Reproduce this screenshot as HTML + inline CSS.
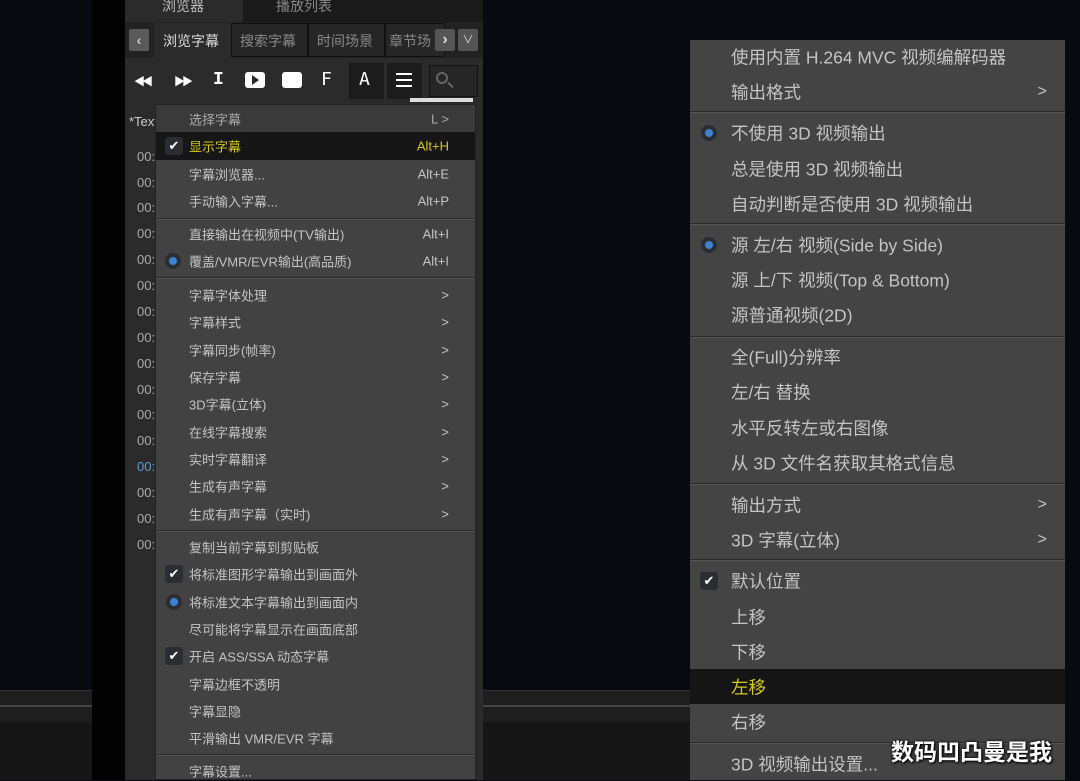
<!DOCTYPE html>
<html><head><meta charset="utf-8"><style>
*{margin:0;padding:0;box-sizing:border-box}
body{width:1080px;height:780px;overflow:hidden;background:#070a0e;position:relative;font-family:"Liberation Sans","Noto Sans CJK SC",sans-serif}
.a{position:absolute}
.lm div.t{position:absolute;left:33px;font-size:13px;color:#c4c4c4;white-space:nowrap;transform:translateY(-50%)}
.lm div.k{position:absolute;right:26px;font-size:13px;color:#c4c4c4;transform:translateY(-50%)}
.sep{position:absolute;height:2px;background:#2a2a2a;border-bottom:1px solid #555}
.rm div.t{position:absolute;left:41px;font-size:17.5px;color:#c4c4c4;white-space:nowrap;transform:translateY(-50%)}
.rm div.k{position:absolute;right:18px;font-size:16px;color:#c4c4c4;transform:translateY(-50%)}
.chk{position:absolute;width:18px;height:18px;background:#2c2c33;border-radius:3px;color:#fff;font-size:13px;text-align:center;line-height:18px;transform:translateY(-50%)}
.rad{position:absolute;width:16px;height:16px;border-radius:50%;background:#2c2c33;transform:translateY(-50%)}
.rad:after{content:"";position:absolute;left:4px;top:4px;width:8px;height:8px;border-radius:50%;background:#3b82d6}
.ts{position:absolute;left:137px;font-size:13px;color:#aaa}
</style></head><body>
<div class="a" style="left:92px;top:0;width:33px;height:780px;background:#020202"></div>
<div class="a" style="left:0;top:690px;width:92px;height:90px;background:#1e1e1e;border-top:1px solid #333"></div>
<div class="a" style="left:0;top:705px;width:92px;height:2px;background:#444"></div>
<div class="a" style="left:0;top:722px;width:92px;height:58px;background:#161616"></div>
<div class="a" style="left:483px;top:690px;width:207px;height:90px;background:#1e1e1e;border-top:1px solid #333"></div>
<div class="a" style="left:483px;top:705px;width:207px;height:2px;background:#444"></div>
<div class="a" style="left:483px;top:722px;width:207px;height:58px;background:#161616"></div>
<!-- panel -->
<div class="a" style="left:125px;top:0;width:358px;height:780px;background:#2b2b2b"></div>
<div class="a" style="left:243px;top:0;width:240px;height:22px;background:#1a1a1a"></div>
<div class="a" style="left:162px;top:-4px;font-size:14px;color:#bbb">浏览器</div>
<div class="a" style="left:276px;top:-4px;font-size:14px;color:#888">播放列表</div>
<div class="a" style="left:125px;top:22px;width:358px;height:36px;background:#222"></div>
<div class="a" style="left:129px;top:29px;width:20px;height:22px;background:#5a5a5a;border-radius:2px;color:#ccc;font-size:14px;text-align:center;line-height:22px;font-weight:bold">‹</div>
<div class="a" style="left:154px;top:23px;width:77px;height:35px;background:#2b2b2b"></div>
<div class="a" style="left:163px;top:31px;font-size:14px;color:#ddd">浏览字幕</div>
<div class="a" style="left:231px;top:23px;width:77px;height:34px;border:1px solid #111;background:#262626"></div>
<div class="a" style="left:240px;top:31px;font-size:14px;color:#888">搜索字幕</div>
<div class="a" style="left:308px;top:23px;width:77px;height:34px;border:1px solid #111;background:#262626"></div>
<div class="a" style="left:317px;top:31px;font-size:14px;color:#888">时间场景</div>
<div class="a" style="left:385px;top:23px;width:60px;height:34px;border:1px solid #111;background:#262626"></div>
<div class="a" style="left:389px;top:31px;font-size:14px;color:#888">章节场</div>
<div class="a" style="left:435px;top:29px;width:20px;height:22px;background:#555;border-radius:2px;color:#ddd;font-size:16px;text-align:center;line-height:22px;font-weight:bold">›</div>
<div class="a" style="left:458px;top:29px;width:20px;height:22px;background:#555;border-radius:2px;color:#ddd;font-size:11px;text-align:center;line-height:22px">∨</div>
<!-- toolbar -->
<div class="a" style="left:134px;top:73px;font-size:11px;color:#fff;font-weight:bold;letter-spacing:-3px">◀◀</div>
<div class="a" style="left:174px;top:73px;font-size:11px;color:#fff;font-weight:bold;letter-spacing:-3px">▶▶</div>
<div class="a" style="left:213px;top:70px;font-size:18px;color:#fff;font-family:'Liberation Mono',monospace;font-weight:bold">I</div>
<div class="a" style="left:245px;top:72px;width:20px;height:16px;background:#fff;border-radius:3px"></div>
<div class="a" style="left:252px;top:75px;width:0;height:0;border-left:7px solid #2b2b2b;border-top:5px solid transparent;border-bottom:5px solid transparent"></div>
<div class="a" style="left:282px;top:72px;width:20px;height:16px;background:#fff;border-radius:3px"></div>
<div class="a" style="left:321px;top:69px;font-size:18px;color:#fff;font-family:'DejaVu Sans Mono',monospace">F</div>
<div class="a" style="left:349px;top:63px;width:35px;height:36px;background:#1c1c1c"></div>
<div class="a" style="left:359px;top:69px;font-size:18px;color:#fff;font-family:'DejaVu Sans Mono',monospace">A</div>
<div class="a" style="left:387px;top:63px;width:35px;height:36px;background:#1c1c1c"></div>
<div class="a" style="left:396px;top:73px;width:16px;height:2px;background:#fff;box-shadow:0 6px #fff,0 12px #fff"></div>
<div class="a" style="left:429px;top:65px;width:49px;height:32px;border:1px solid #111;background:#262626"></div>
<div class="a" style="left:436px;top:72px;width:12px;height:12px;border:2px solid #666;border-radius:50%"></div>
<div class="a" style="left:447px;top:84px;width:7px;height:2px;background:#666;transform:rotate(45deg)"></div>
<div class="a" style="left:410px;top:98px;width:63px;height:4px;background:#ddd"></div>
<div class="a" style="left:129px;top:114px;font-size:13px;color:#ccc">*Text</div>
<div class="ts" style="top:149px">00:</div><div class="ts" style="top:175px">00:</div><div class="ts" style="top:200px">00:</div><div class="ts" style="top:226px">00:</div><div class="ts" style="top:252px">00:</div><div class="ts" style="top:278px">00:</div><div class="ts" style="top:304px">00:</div><div class="ts" style="top:330px">00:</div><div class="ts" style="top:356px">00:</div><div class="ts" style="top:382px">00:</div><div class="ts" style="top:407px">00:</div><div class="ts" style="top:433px">00:</div><div class="ts" style="top:459px;color:#5b9be0">00:</div><div class="ts" style="top:485px">00:</div><div class="ts" style="top:511px">00:</div><div class="ts" style="top:537px">00:</div>
<!-- left menu -->
<div class="a lm" style="left:155px;top:104px;width:321px;height:676px;background:#424242;border:1px solid #222">
<div class="a" style="left:0;top:0;width:319px;height:27px;background:#3a3a3a"></div>
<div class="a" style="left:0;top:27px;width:319px;height:28px;background:#161616"></div>
<div class="t" style="top:14px;color:#aaa">选择字幕</div><div class="k" style="top:14px;color:#aaa">L &gt;</div>
<div class="chk" style="left:9px;top:41px">✔</div><div class="t" style="top:41px;color:#d4c81a">显示字幕</div><div class="k" style="top:41px;color:#d4c81a">Alt+H</div>
<div class="t" style="top:69px">字幕浏览器...</div><div class="k" style="top:69px">Alt+E</div>
<div class="t" style="top:96px">手动输入字幕...</div><div class="k" style="top:96px">Alt+P</div>
<div class="sep" style="left:0;top:113px;width:319px"></div>
<div class="t" style="top:129px">直接输出在视频中(TV输出)</div><div class="k" style="top:129px">Alt+I</div>
<div class="rad" style="left:9px;top:156px"></div><div class="t" style="top:156px">覆盖/VMR/EVR输出(高品质)</div><div class="k" style="top:156px">Alt+I</div>
<div class="sep" style="left:0;top:172px;width:319px"></div>
<div class="t" style="top:190px">字幕字体处理</div><div class="k" style="top:190px">&gt;</div>
<div class="t" style="top:217px">字幕样式</div><div class="k" style="top:217px">&gt;</div>
<div class="t" style="top:245px">字幕同步(帧率)</div><div class="k" style="top:245px">&gt;</div>
<div class="t" style="top:272px">保存字幕</div><div class="k" style="top:272px">&gt;</div>
<div class="t" style="top:299px">3D字幕(立体)</div><div class="k" style="top:299px">&gt;</div>
<div class="t" style="top:327px">在线字幕搜索</div><div class="k" style="top:327px">&gt;</div>
<div class="t" style="top:354px">实时字幕翻译</div><div class="k" style="top:354px">&gt;</div>
<div class="t" style="top:381px">生成有声字幕</div><div class="k" style="top:381px">&gt;</div>
<div class="t" style="top:409px">生成有声字幕（实时)</div><div class="k" style="top:409px">&gt;</div>
<div class="sep" style="left:0;top:425px;width:319px"></div>
<div class="t" style="top:442px">复制当前字幕到剪贴板</div>
<div class="chk" style="left:9px;top:469px">✔</div><div class="t" style="top:469px">将标准图形字幕输出到画面外</div>
<div class="rad" style="left:10px;top:497px"></div><div class="t" style="top:497px">将标准文本字幕输出到画面内</div>
<div class="t" style="top:524px">尽可能将字幕显示在画面底部</div>
<div class="chk" style="left:9px;top:551px">✔</div><div class="t" style="top:551px">开启 ASS/SSA 动态字幕</div>
<div class="t" style="top:579px">字幕边框不透明</div>
<div class="t" style="top:606px">字幕显隐</div>
<div class="t" style="top:633px">平滑输出 VMR/EVR 字幕</div>
<div class="sep" style="left:0;top:649px;width:319px"></div>
<div class="t" style="top:666px">字幕设置...</div>
</div>
<!-- right menu -->
<div class="a rm" style="left:690px;top:40px;width:375px;height:740px;background:#444">
<div class="a" style="left:0;top:629px;width:375px;height:35px;background:#151515"></div>
<div class="t" style="top:17px">使用内置 H.264 MVC 视频编解码器</div>
<div class="t" style="top:52px">输出格式</div><div class="k" style="top:52px">&gt;</div>
<div class="sep" style="left:0;top:71px;width:375px"></div>
<div class="rad" style="left:11px;top:93px"></div><div class="t" style="top:93px">不使用 3D 视频输出</div>
<div class="t" style="top:129px">总是使用 3D 视频输出</div>
<div class="t" style="top:164px">自动判断是否使用 3D 视频输出</div>
<div class="sep" style="left:0;top:183px;width:375px"></div>
<div class="rad" style="left:11px;top:205px"></div><div class="t" style="top:205px">源 左/右 视频(Side by Side)</div>
<div class="t" style="top:240px">源 上/下 视频(Top &amp; Bottom)</div>
<div class="t" style="top:275px">源普通视频(2D)</div>
<div class="sep" style="left:0;top:296px;width:375px"></div>
<div class="t" style="top:317px">全(Full)分辨率</div>
<div class="t" style="top:352px">左/右 替换</div>
<div class="t" style="top:388px">水平反转左或右图像</div>
<div class="t" style="top:423px">从 3D 文件名获取其格式信息</div>
<div class="sep" style="left:0;top:443px;width:375px"></div>
<div class="t" style="top:465px">输出方式</div><div class="k" style="top:465px">&gt;</div>
<div class="t" style="top:500px">3D 字幕(立体)</div><div class="k" style="top:500px">&gt;</div>
<div class="sep" style="left:0;top:519px;width:375px"></div>
<div class="chk" style="left:10px;top:541px">✔</div><div class="t" style="top:541px">默认位置</div>
<div class="t" style="top:577px">上移</div>
<div class="t" style="top:612px">下移</div>
<div class="t" style="top:647px;color:#d4c81a">左移</div>
<div class="t" style="top:682px">右移</div>
<div class="sep" style="left:0;top:702px;width:375px"></div>
<div class="t" style="top:724px">3D 视频输出设置...</div>
</div>
<div class="a" style="left:891px;top:733px;font-size:23px;color:#fff;font-weight:bold;text-shadow:0 0 3px #000,1px 1px 2px #000">数码凹凸曼是我</div>
</body></html>
